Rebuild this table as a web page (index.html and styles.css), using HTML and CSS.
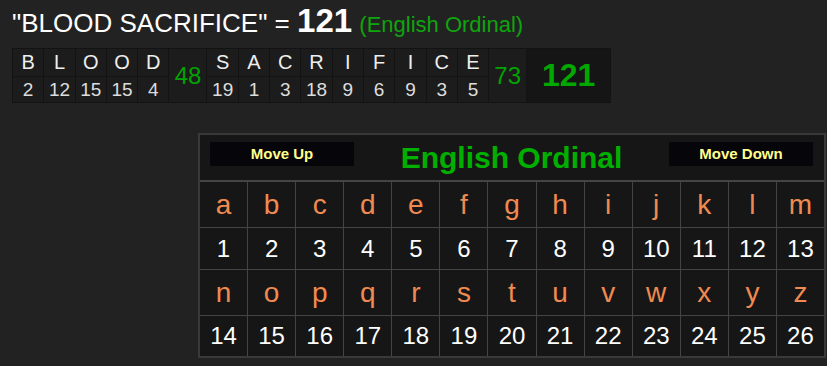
FILE: index.html
```html
<!DOCTYPE html>
<html>
<head>
<meta charset="utf-8">
<link rel="stylesheet" href="styles.css">
</head>
<body>
<div class="page">
  <div class="title"><span class="phrase">"BLOOD SACRIFICE" = </span><span class="total">121</span><span class="phrase"> </span><span class="cipher">(English Ordinal)</span></div>
  <div class="word">
    <div class="col"><div class="l">B</div><div class="n">2</div></div>
    <div class="col"><div class="l">L</div><div class="n">12</div></div>
    <div class="col"><div class="l">O</div><div class="n">15</div></div>
    <div class="col"><div class="l">O</div><div class="n">15</div></div>
    <div class="col"><div class="l">D</div><div class="n">4</div></div>
    <div class="sum">48</div>
    <div class="col"><div class="l">S</div><div class="n">19</div></div>
    <div class="col"><div class="l">A</div><div class="n">1</div></div>
    <div class="col"><div class="l">C</div><div class="n">3</div></div>
    <div class="col"><div class="l">R</div><div class="n">18</div></div>
    <div class="col"><div class="l">I</div><div class="n">9</div></div>
    <div class="col"><div class="l">F</div><div class="n">6</div></div>
    <div class="col"><div class="l">I</div><div class="n">9</div></div>
    <div class="col"><div class="l">C</div><div class="n">3</div></div>
    <div class="col"><div class="l">E</div><div class="n">5</div></div>
    <div class="sum">73</div>
    <div class="grand">121</div>
  </div>
  <div class="chart">
    <div class="head">
      <div class="btn">Move Up</div>
      <div class="heading">English Ordinal</div>
      <div class="btn">Move Down</div>
    </div>
    <div class="ch">a</div><div class="ch">b</div><div class="ch">c</div><div class="ch">d</div><div class="ch">e</div><div class="ch">f</div><div class="ch">g</div><div class="ch">h</div><div class="ch">i</div><div class="ch">j</div><div class="ch">k</div><div class="ch">l</div><div class="ch">m</div>
    <div class="nu">1</div><div class="nu">2</div><div class="nu">3</div><div class="nu">4</div><div class="nu">5</div><div class="nu">6</div><div class="nu">7</div><div class="nu">8</div><div class="nu">9</div><div class="nu">10</div><div class="nu">11</div><div class="nu">12</div><div class="nu">13</div>
    <div class="ch">n</div><div class="ch">o</div><div class="ch">p</div><div class="ch">q</div><div class="ch">r</div><div class="ch">s</div><div class="ch">t</div><div class="ch">u</div><div class="ch">v</div><div class="ch">w</div><div class="ch">x</div><div class="ch">y</div><div class="ch">z</div>
    <div class="nu">14</div><div class="nu">15</div><div class="nu">16</div><div class="nu">17</div><div class="nu">18</div><div class="nu">19</div><div class="nu">20</div><div class="nu">21</div><div class="nu">22</div><div class="nu">23</div><div class="nu">24</div><div class="nu">25</div><div class="nu">26</div>
  </div>
</div>
</body>
</html>
```

FILE: styles.css
```css
html, body {
  margin: 0;
  padding: 0;
  background: #222222;
}

.page {
  font-family: "Liberation Sans", Arial, sans-serif;
  padding: 4px 1px 0 12px;
  display: flex;
  flex-direction: column;
  align-items: flex-start;
}

.title {
  line-height: 1;
  color: #ffffff;
  white-space: pre;
}

.phrase {
  font-size: 26px;
}

.total {
  font-size: 33px;
  font-weight: bold;
}

.cipher {
  font-size: 22px;
  color: #0ea50e;
}

.word {
  margin-top: 11px;
  display: flex;
  gap: 1px;
  padding: 1px;
  background: #131313;
}

.col {
  width: 30.3px;
  display: flex;
  flex-direction: column;
  gap: 1px;
}

.l, .n {
  background: #1c1c1c;
  text-align: center;
}

.l {
  height: 27px;
  line-height: 27px;
  font-size: 20px;
  color: #eeeeee;
}

.n {
  height: 25px;
  line-height: 25px;
  font-size: 19px;
  color: #dddddd;
}

.sum {
  width: 37px;
  background: #1c1c1c;
  color: #00a300;
  font-size: 24px;
  display: flex;
  align-items: center;
  justify-content: center;
}

.grand {
  width: 83px;
  background: #151515;
  color: #00a800;
  font-size: 32px;
  font-weight: bold;
  display: flex;
  align-items: center;
  justify-content: center;
}

.chart {
  margin-top: 30px;
  align-self: flex-end;
  width: 624px;
  border: 2px solid #393939;
  background: #444444;
  display: grid;
  grid-template-columns: repeat(13, 1fr);
  grid-template-rows: 46px 45px 41px 45px 40px;
  gap: 1px;
}

.head {
  grid-column: 1 / -1;
  margin-bottom: 1px;
  background: #161616;
  display: flex;
  justify-content: space-between;
  align-items: center;
  padding: 0 11px 0 10px;
}

.btn {
  align-self: flex-start;
  margin-top: 7px;
  width: 144px;
  height: 24px;
  line-height: 24px;
  background: #05050a;
  color: #ffff8c;
  font-size: 15px;
  font-weight: bold;
  text-align: center;
}

.heading {
  color: #00b000;
  font-size: 30px;
  font-weight: bold;
}

.ch, .nu {
  background: #161616;
  display: flex;
  align-items: center;
  justify-content: center;
}

.ch {
  color: #f08a50;
  font-size: 28px;
}

.nu {
  color: #ffffff;
  font-size: 24px;
}
```
